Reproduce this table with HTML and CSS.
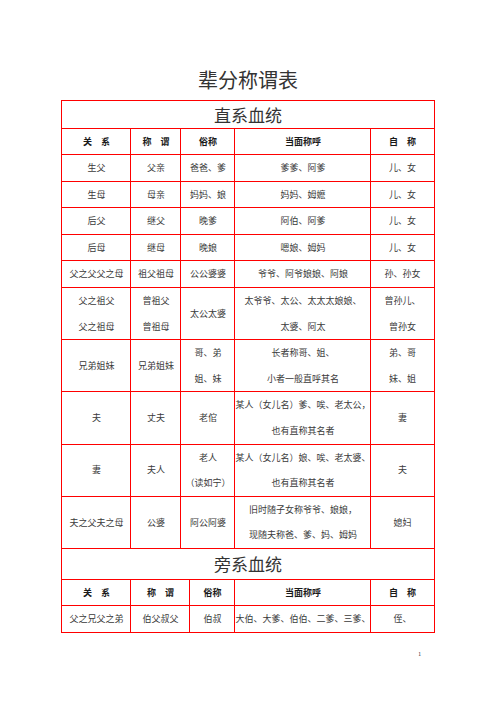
FILE: index.html
```html
<!DOCTYPE html>
<html lang="zh">
<head>
<meta charset="utf-8">
<link rel="stylesheet" href="styles.css">
</head>
<body>
<div class="page">
  <h1 class="title">辈分称谓表</h1>
  <table class="tbl tbl-a">
    <colgroup>
      <col class="c1"><col class="c2a"><col class="c3a"><col class="c4"><col class="c5">
    </colgroup>
    <tr><td colspan="5" class="sec sec-a">直系血统</td></tr>
    <tr class="head"><td>关　系</td><td>称　谓</td><td>俗称</td><td>当面称呼</td><td>自　称</td></tr>
    <tr><td>生父</td><td>父亲</td><td>爸爸、爹</td><td>爹爹、阿爹</td><td>儿、女</td></tr>
    <tr><td>生母</td><td>母亲</td><td>妈妈、娘</td><td>妈妈、姆嬷</td><td>儿、女</td></tr>
    <tr><td>后父</td><td>继父</td><td>晚爹</td><td>阿伯、阿爹</td><td>儿、女</td></tr>
    <tr><td>后母</td><td>继母</td><td>晚娘</td><td>嗯娘、姆妈</td><td>儿、女</td></tr>
    <tr><td>父之父父之母</td><td>祖父祖母</td><td>公公婆婆</td><td>爷爷、阿爷娘娘、阿娘</td><td>孙、孙女</td></tr>
    <tr><td>父之祖父<br>父之祖母</td><td>曾祖父<br>曾祖母</td><td>太公太婆</td><td>太爷爷、太公、太太太娘娘、<br>太婆、阿太</td><td>曾孙儿、<br>曾孙女</td></tr>
    <tr><td>兄弟姐妹</td><td>兄弟姐妹</td><td>哥、弟<br>姐、妹</td><td>长者称哥、姐、<br>小者一般直呼其名</td><td>弟、哥<br>妹、姐</td></tr>
    <tr><td>夫</td><td>丈夫</td><td>老倌</td><td>某人（女儿名）爹、唉、老太公，<br>也有直称其名者</td><td>妻</td></tr>
    <tr><td>妻</td><td>夫人</td><td>老人<br>（读如宁）</td><td>某人（女儿名）娘、唉、老太婆、<br>也有直称其名者</td><td>夫</td></tr>
    <tr><td>夫之父夫之母</td><td>公婆</td><td>阿公阿婆</td><td>旧时随子女称爷爷、娘娘，<br>现随夫称爸、爹、妈、姆妈</td><td>媳妇</td></tr>
  </table>
  <table class="tbl tbl-b">
    <colgroup>
      <col class="c1"><col class="c2b"><col class="c3b"><col class="c4"><col class="c5">
    </colgroup>
    <tr><td colspan="5" class="sec sec-b">旁系血统</td></tr>
    <tr class="head"><td>关　系</td><td>称　谓</td><td>俗称</td><td>当面称呼</td><td>自　称</td></tr>
    <tr><td>父之兄父之弟</td><td>伯父叔父</td><td>伯叔</td><td>大伯、大爹、伯伯、二爹、三爹、</td><td>侄、</td></tr>
  </table>
  <div class="pagenum">1</div>
</div>
</body>
</html>
```

FILE: styles.css
```css
html, body {
  margin: 0;
  padding: 0;
  background: #ffffff;
}

.page {
  width: 496px;
  padding-top: 68px;
  font-family: "Noto Sans CJK SC", "Noto Sans", sans-serif;
  color: #333333;
}

.title {
  margin: 0 0 8px 0;
  font-size: 20px;
  line-height: 24px;
  font-weight: 400;
  text-align: center;
  color: #333333;
}

.tbl {
  width: 372px;
  margin: 0 auto;
  border-collapse: collapse;
  table-layout: fixed;
}

.tbl-b {
  margin-top: -1px;
}

.c1 { width: 69px; }
.c2a { width: 50px; }
.c3a { width: 54px; }
.c2b { width: 59px; }
.c3b { width: 45px; }
.c4 { width: 136px; }
.c5 { width: 63px; }

.tbl td {
  border: 1px solid #ff0000;
  padding: 0;
  text-align: center;
  vertical-align: middle;
  font-size: 9px;
  line-height: 25.6px;
  white-space: nowrap;
  overflow: hidden;
  color: #3a3a3a;
}

.tbl td.sec {
  font-size: 17px;
  color: #333333;
}

.tbl td.sec-a {
  line-height: 27px;
}

.tbl td.sec-b {
  line-height: 30px;
}

.head td {
  font-weight: 700;
  color: #1a1a1a;
  line-height: 25px;
}

.pagenum {
  width: 372px;
  margin: 18px auto 0 auto;
  box-sizing: border-box;
  padding-right: 13px;
  text-align: right;
  font-size: 5px;
  line-height: 6px;
  color: #222222;
}
```
